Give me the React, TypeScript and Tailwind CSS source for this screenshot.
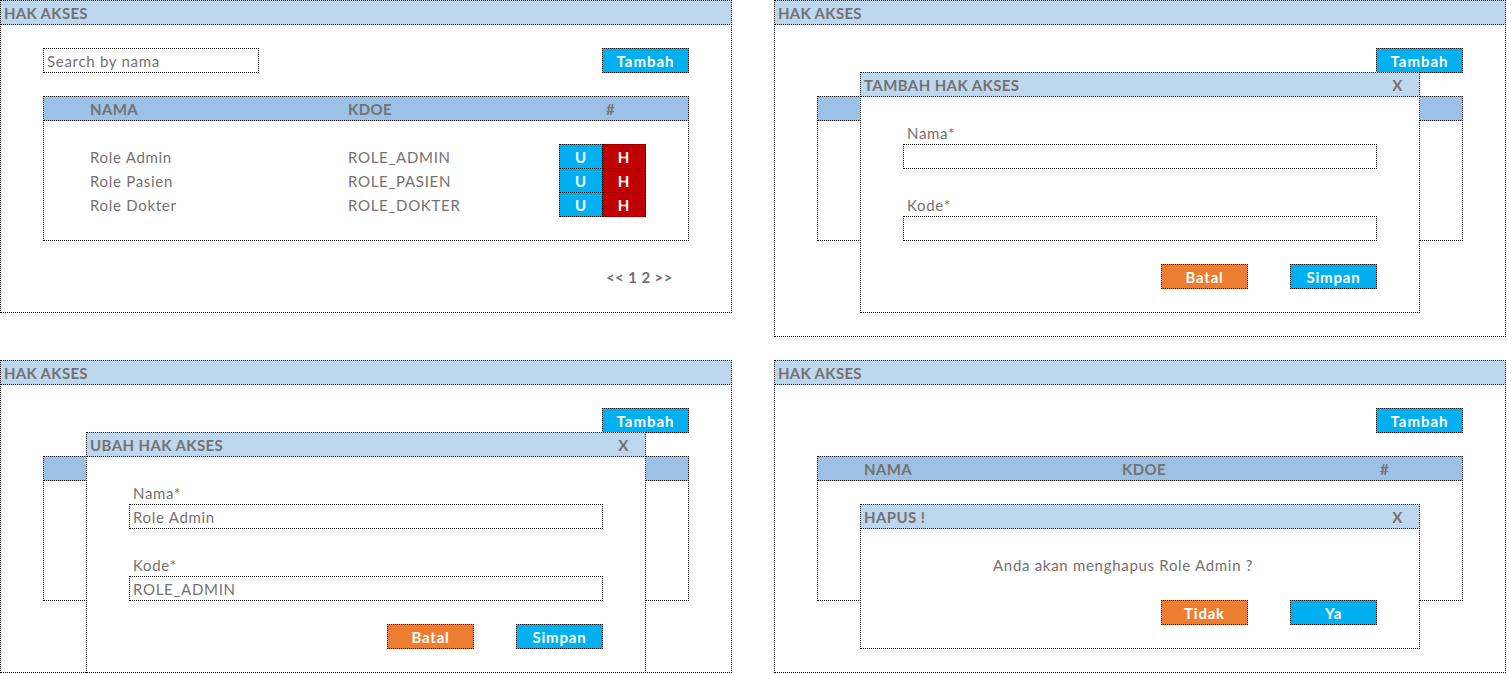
import React from "react";

const frame = "border border-dotted border-black -mr-px -mb-px";
const plain = "text-[15px] leading-[26px] text-[#767171] whitespace-nowrap tracking-[0.7px]";
const plainBold = "text-[15px] leading-[26px] text-[#767171] whitespace-nowrap font-bold tracking-[0.4px]";
const boxed = "text-[15px] leading-[24px] whitespace-nowrap";

function PanelBase({ tall }: { tall?: boolean }) {
  return (
    <>
      <div
        className={
          tall
            ? `col-start-1 col-span-17 row-start-1 row-span-14 ${frame}`
            : `col-start-1 col-span-17 row-start-1 row-span-13 ${frame}`
        }
      />
      <div className={`col-start-1 col-span-17 row-start-1 bg-[#BDD7EE] ${frame} pl-[3px] font-bold tracking-[0.3px] text-[#767171] ${boxed}`}>
        HAK AKSES
      </div>
      <div className={`col-start-15 col-span-2 row-start-3 bg-[#00B0F0] ${frame} text-white font-bold tracking-[1px] text-center ${boxed}`}>
        Tambah
      </div>
    </>
  );
}

function TableBg({ headerText }: { headerText?: boolean }) {
  return (
    <>
      <div className={`col-start-2 col-span-15 row-start-5 row-span-6 ${frame}`} />
      <div className={`col-start-2 col-span-15 row-start-5 bg-[#9BC2E6] ${frame}`} />
      {headerText && (
        <>
          <div className={`col-start-3 col-span-2 row-start-5 pl-[4px] ${plainBold}`}>NAMA</div>
          <div className={`col-start-9 col-span-2 row-start-5 pl-[4px] ${plainBold}`}>KDOE</div>
          <div className={`col-start-15 row-start-5 pl-[4px] ${plainBold}`}>#</div>
        </>
      )}
    </>
  );
}

function Button({ pos, color, label }: { pos: string; color: string; label: string }) {
  return (
    <div className={`${pos} ${color} ${frame} text-white font-bold tracking-[0.8px] text-center ${boxed}`}>{label}</div>
  );
}

function FormModal({ title, nama, kode }: { title: string; nama: string; kode: string }) {
  return (
    <>
      <div className={`col-start-3 col-span-13 row-start-4 row-span-10 bg-white ${frame}`} />
      <div className={`col-start-3 col-span-13 row-start-4 bg-[#BDD7EE] ${frame} pl-[3px] font-bold tracking-[0.4px] text-[#767171] ${boxed}`}>
        {title}
      </div>
      <div className={`col-start-15 row-start-4 text-center ${plainBold}`}>X</div>
      <div className={`col-start-4 col-span-3 row-start-6 pl-[4px] ${plain}`}>Nama*</div>
      <div className={`col-start-4 col-span-11 row-start-7 ${frame} pl-[3px] text-[#767171] tracking-[0.7px] ${boxed}`}>{nama}</div>
      <div className={`col-start-4 col-span-3 row-start-9 pl-[4px] ${plain}`}>Kode*</div>
      <div className={`col-start-4 col-span-11 row-start-10 ${frame} pl-[3px] text-[#767171] tracking-[0.7px] ${boxed}`}>{kode}</div>
      <Button pos="col-start-10 col-span-2 row-start-12" color="bg-[#ED7D31]" label="Batal" />
      <Button pos="col-start-13 col-span-2 row-start-12" color="bg-[#00B0F0]" label="Simpan" />
    </>
  );
}

const rows = [
  { nama: "Role Admin", kode: "ROLE_ADMIN" },
  { nama: "Role Pasien", kode: "ROLE_PASIEN" },
  { nama: "Role Dokter", kode: "ROLE_DOKTER" },
];

const rowStarts = ["row-start-7", "row-start-8", "row-start-9"];

export default function App() {
  return (
    <div className="bg-white w-[1507px] h-[674px] overflow-hidden font-[Lato,sans-serif]">
      <div className="grid grid-cols-[731px_731px] gap-x-[43px] gap-y-[24px] items-start">
        {/* Panel 1: list */}
        <div className="grid grid-cols-[repeat(17,43px)] grid-rows-[repeat(13,24px)]">
          <PanelBase />
          <div className={`col-start-2 col-span-5 row-start-3 ${frame} pl-[3px] text-[#767171] tracking-[0.7px] ${boxed}`}>
            Search by nama
          </div>
          <TableBg headerText />
          {rows.map((r, i) => (
            <React.Fragment key={r.kode}>
              <div className={`col-start-3 col-span-4 ${rowStarts[i]} pl-[4px] ${plain}`}>{r.nama}</div>
              <div className={`col-start-9 col-span-4 ${rowStarts[i]} pl-[4px] ${plain}`}>{r.kode}</div>
              <Button pos={`col-start-14 ${rowStarts[i]}`} color="bg-[#00B0F0]" label="U" />
              <Button pos={`col-start-15 ${rowStarts[i]}`} color="bg-[#C00000]" label="H" />
            </React.Fragment>
          ))}
          <div className={`col-start-15 col-span-2 row-start-12 pl-[4px] ${plainBold}`}>&lt;&lt; 1 2 &gt;&gt;</div>
        </div>

        {/* Panel 2: tambah */}
        <div className="grid grid-cols-[repeat(17,43px)] grid-rows-[repeat(14,24px)]">
          <PanelBase tall />
          <TableBg />
          <FormModal title="TAMBAH HAK AKSES" nama="" kode="" />
        </div>

        {/* Panel 3: ubah */}
        <div className="grid grid-cols-[repeat(17,43px)] grid-rows-[repeat(13,24px)]">
          <PanelBase />
          <TableBg />
          <FormModal title="UBAH HAK AKSES" nama="Role Admin" kode="ROLE_ADMIN" />
        </div>

        {/* Panel 4: hapus */}
        <div className="grid grid-cols-[repeat(17,43px)] grid-rows-[repeat(13,24px)]">
          <PanelBase />
          <TableBg headerText />
          <div className={`col-start-3 col-span-13 row-start-7 row-span-6 bg-white ${frame}`} />
          <div className={`col-start-3 col-span-13 row-start-7 bg-[#BDD7EE] ${frame} pl-[3px] font-bold tracking-[0.4px] text-[#767171] ${boxed}`}>
            HAPUS !
          </div>
          <div className={`col-start-15 row-start-7 text-center ${plainBold}`}>X</div>
          <div className={`col-start-6 col-span-7 row-start-9 pl-[4px] ${plain}`}>Anda akan menghapus Role Admin ?</div>
          <Button pos="col-start-10 col-span-2 row-start-11" color="bg-[#ED7D31]" label="Tidak" />
          <Button pos="col-start-13 col-span-2 row-start-11" color="bg-[#00B0F0]" label="Ya" />
        </div>
      </div>
    </div>
  );
}
